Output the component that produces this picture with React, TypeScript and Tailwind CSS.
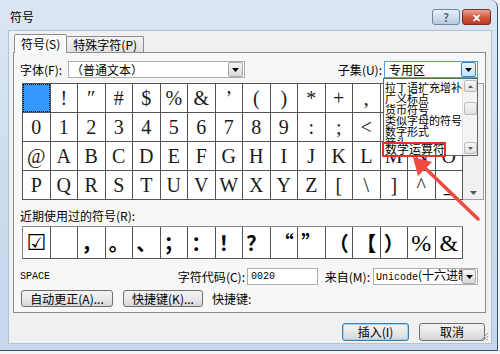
import React from "react";

const row1 = ["", "!", "″", "#", "$", "%", "&", "’", "(", ")", "*", "+", ",", "-", ".", "/"];
const rows = [row1, "0123456789:;<=>?".split(""), "@ABCDEFGHIJKLMNO".split(""), "PQRSTUVWXYZ[\\]^_".split("")];
const recent = ["☑", "", "，", "。", "、", "；", "：", "！", "？", "“", "”", "（", "【", "）", "%", "&"];
const subsets = ["拉丁语扩充增补", "广义标点", "货币符号", "类似字母的符号", "数字形式"];

function Key({ k }: { k: string }) {
  return <span>({k})</span>;
}

function DropBtn({ active }: { active?: boolean }) {
  return (
    <div
      className={
        "w-[15px] h-[15px] flex items-center justify-center border rounded-[2px] " +
        (active
          ? "border-[#3c7fb1] bg-gradient-to-b from-[#eaf6fd] to-[#bee6fd]"
          : "border-[#a8a8a8] bg-gradient-to-b from-[#f6f6f6] to-[#dadada]")
      }
    >
      <svg width="7" height="4" viewBox="0 0 7 4">
        <path d="M0 0h7L3.5 4z" fill="#000" />
      </svg>
    </div>
  );
}

function Btn({ children, w, focus }: { children: React.ReactNode; w: string; focus?: boolean }) {
  return (
    <div
      className={
        "h-full flex items-center justify-center rounded-[3px] border bg-gradient-to-b from-[#f3f3f3] via-[#e9e9e9] to-[#d6d6d6] " +
        w +
        (focus ? " border-[#3c7fb1] shadow-[inset_0_0_0_1px_#9fd3f5]" : " border-[#707070]")
      }
    >
      {children}
    </div>
  );
}

export default function App() {
  return (
    <div className="relative w-[500px] h-[354px] overflow-hidden bg-[#f4f4f4] text-[12px] leading-[14px] text-black font-['Noto_Sans_CJK_SC','Liberation_Sans',sans-serif]">
      <div className="w-[498px] h-[351px] flex flex-col rounded-tr-[7px] border-r border-b border-[#34566f] bg-gradient-to-b from-[#dbe6f3] via-[#cddcee] to-[#c6d7ec]">
        {/* title bar */}
        <div className="h-[30px] flex items-start">
          <div className="pl-[10px] pt-[10px] text-[12px]">符号</div>
          <div className="flex-1" />
          <div className="mt-[9px] w-[28px] h-[16px] rounded-[3px] border border-[#7186a0] bg-gradient-to-b from-[#e8eff7] via-[#d2deec] to-[#b8cade] flex items-center justify-center text-[11px] font-bold text-[#58697f]">
            ?
          </div>
          <div className="mt-[9px] ml-[2px] mr-[6px] w-[29px] h-[16px] rounded-[3px] border border-[#7c2e1f] bg-gradient-to-b from-[#e9a593] via-[#cf5a3f] to-[#b73a21] flex items-center justify-center text-[11px] font-bold text-white">
            ✕
          </div>
        </div>

        {/* body */}
        <div className="relative ml-[8px] w-[484px] h-[314px] border border-[#b3c2d4] bg-[#f0f0f0] flex flex-col">
          {/* tabs */}
          <div className="mt-[3px] pl-[5px] flex items-end">
            <div className="relative z-10 -mb-px h-[19px] px-[6px] flex items-center border border-b-0 border-[#898c95] bg-[#fbfbfb] rounded-t-[2px]">
              符号<Key k="S" />
            </div>
            <div className="h-[16px] px-[6px] flex items-center border border-l-0 border-b-0 border-[#898c95] bg-gradient-to-b from-[#f3f3f3] to-[#e1e1e1] rounded-t-[2px]">
              特殊字符<Key k="P" />
            </div>
          </div>

          {/* panel */}
          <div className="ml-[4px] w-[473px] h-[261px] border border-[#898c95] bg-[#f7f7f7] flex flex-col">
            {/* font row */}
            <div className="mt-[8px] h-[17px] flex items-center">
              <div className="w-[54px] pl-[6px]">
                字体<Key k="F" />:
              </div>
              <div className="w-[177px] h-full flex items-center justify-between border border-[#abadb3] bg-white pl-[2px] pr-px">
                <span>（普通文本）</span>
                <DropBtn />
              </div>
              <div className="flex-1" />
              <div className="mr-[2px]">
                子集<Key k="U" />:
              </div>
              <div className="mr-[7px] w-[94px] h-full flex items-center justify-between border border-[#569de5] bg-white pl-[4px] pr-px">
                <span>专用区</span>
                <DropBtn active />
              </div>
            </div>

            {/* symbol grid */}
            <div className="mt-[5px] ml-[8px] w-[462px] h-[117px] flex">
              <div className="grid grid-cols-[repeat(16,27.5px)] border-l border-t border-[#555] font-['Liberation_Serif',serif] text-[20px] text-[#1a1a1a]">
                {rows.map((r, ri) =>
                  r.map((c, ci) => (
                    <div
                      key={ri + "-" + ci}
                      className="h-[29px] border-r border-b border-[#555] bg-white flex items-center justify-center"
                    >
                      {ri === 0 && ci === 0 ? (
                        <div className="w-full h-full bg-[#3399ff] border border-dotted border-black" />
                      ) : (
                        c
                      )}
                    </div>
                  ))
                )}
              </div>
              <div className="flex-1 border border-l-0 border-[#a0a0a0] bg-[#f0f0f0] flex flex-col items-center justify-between py-[4px]">
                <svg width="7" height="4" viewBox="0 0 7 4">
                  <path d="M0 4h7L3.5 0z" fill="#555" />
                </svg>
                <svg width="7" height="4" viewBox="0 0 7 4">
                  <path d="M0 0h7L3.5 4z" fill="#555" />
                </svg>
              </div>
            </div>

            {/* recent */}
            <div className="mt-[9px] pl-[6px]">
              近期使用过的符号<Key k="R" />:
            </div>
            <div className="mt-[3px] ml-[8px] w-[441px] h-[33px] grid grid-cols-[repeat(16,27.5px)] border-l border-t border-[#888] bg-white">
              {recent.map((c, i) => (
                <div
                  key={i}
                  className={
                    "border-r border-b border-[#555] flex items-center justify-center " +
                    (i === 0
                      ? "font-['DejaVu_Sans',sans-serif] text-[22px]"
                      : i >= 14
                      ? "font-['Liberation_Serif',serif] text-[24px]"
                      : "text-[20px] font-bold")
                  }
                >
                  {c}
                </div>
              ))}
            </div>

            {/* code row */}
            <div className="mt-[9px] h-[17px] flex items-center">
              <div className="w-[149px] pl-[6px] font-['Liberation_Mono',monospace] text-[10px]">SPACE</div>
              <div className="w-[84px] text-right pr-[2px]">
                字符代码<Key k="C" />:
              </div>
              <div className="w-[71px] h-full border border-[#abadb3] bg-white pl-[3px] flex items-center font-['Liberation_Mono',monospace] text-[10px]">
                0020
              </div>
              <div className="w-[55px] text-right pr-[3px]">
                来自<Key k="M" />:
              </div>
              <div className="w-[105px] h-full flex items-center justify-between border border-[#abadb3] bg-white pl-[2px] pr-px overflow-hidden">
                <span className="whitespace-nowrap overflow-hidden">
                  <span className="font-['Liberation_Mono',monospace] text-[10px]">Unicode</span>(十六进制
                </span>
                <DropBtn />
              </div>
            </div>

            {/* shortcut row */}
            <div className="mt-[5px] h-[17px] flex items-center">
              <div className="ml-[7px] h-full">
                <Btn w="w-[92px]">
                  自动更正<Key k="A" />...
                </Btn>
              </div>
              <div className="ml-[10px] h-full">
                <Btn w="w-[80px]">
                  快捷键<Key k="K" />...
                </Btn>
              </div>
              <div className="ml-[9px]">快捷键:</div>
            </div>
          </div>

          {/* bottom buttons */}
          <div className="mt-[10px] h-[18px] flex">
            <div className="ml-[333px] h-full">
              <Btn w="w-[67px]" focus>
                插入<Key k="I" />
              </Btn>
            </div>
            <div className="ml-[10px] h-full">
              <Btn w="w-[66px]">取消</Btn>
            </div>
          </div>

          {/* resize grip */}
          <svg className="absolute right-[2px] bottom-[2px]" width="10" height="10" viewBox="0 0 10 10">
            <path d="M9 2L2 9M9 5L5 9M9 8L8 9" stroke="#9a9a9a" strokeWidth="1" />
          </svg>
        </div>
      </div>

      {/* open subset list */}
      <div className="absolute left-[383px] top-[78px] w-[95px] h-[78px] border border-[#646464] bg-white flex">
        <div className="flex-1 flex flex-col overflow-hidden text-[11px] leading-[11px]">
          <div className="h-[3px]" />
          {subsets.map((s) => (
            <div key={s} className="h-[11px] pl-[1px] whitespace-nowrap">
              {s}
            </div>
          ))}
          <div className="h-[6px] overflow-hidden pl-[1px] leading-[11px]">箭头</div>
          <div className="h-[13px] bg-white pl-[1px] whitespace-nowrap text-[12px] leading-[13px]">数学运算符</div>
        </div>
        <div className="w-[15px] bg-[#f4f4f4] border-l border-[#e4e4e4] flex flex-col items-center py-[1px]">
          <div className="w-[13px] h-[12px] border border-[#bcbcbc] rounded-[2px] bg-gradient-to-b from-[#f6f6f6] to-[#e2e2e2] flex items-center justify-center">
            <svg width="5" height="3" viewBox="0 0 5 3">
              <path d="M0 3h5L2.5 0z" fill="#606060" />
            </svg>
          </div>
          <div className="mt-[10px] w-[13px] h-[13px] border border-[#bcbcbc] rounded-[2px] bg-gradient-to-b from-[#f6f6f6] to-[#e2e2e2]" />
          <div className="flex-1" />
          <div className="w-[13px] h-[12px] border border-[#bcbcbc] rounded-[2px] bg-gradient-to-b from-[#f6f6f6] to-[#e2e2e2] flex items-center justify-center">
            <svg width="5" height="3" viewBox="0 0 5 3">
              <path d="M0 0h5L2.5 3z" fill="#606060" />
            </svg>
          </div>
        </div>
      </div>

      {/* annotation */}
      <div className="absolute left-[382px] top-[142px] w-[64px] h-[15px] border-2 border-[#e8302a]" />
      <svg className="absolute left-0 top-0 pointer-events-none" width="500" height="354" viewBox="0 0 500 354">
        <path d="M424 167L478 219" stroke="#ee4a3f" strokeWidth="3.5" strokeLinecap="round" />
        <path d="M413 157L432 162L418 176z" fill="#ee4a3f" />
      </svg>
    </div>
  );
}
